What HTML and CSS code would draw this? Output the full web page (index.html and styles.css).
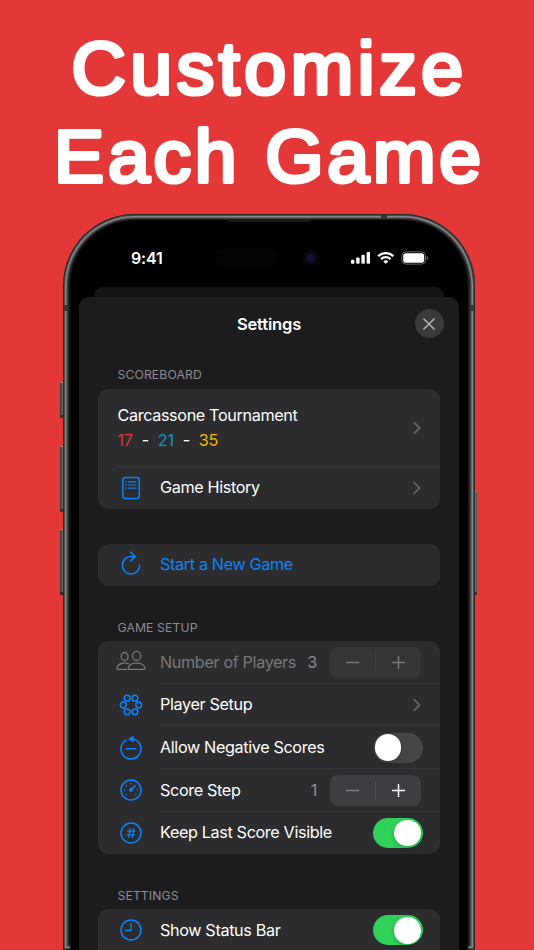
FILE: index.html
```html
<!DOCTYPE html>
<html lang="en">
<head>
    <meta charset="UTF-8">
    <meta name="viewport" content="width=device-width, initial-scale=1.0">
    <title>Customize Each Game</title>
    <link rel="stylesheet" href="styles.css">
</head>
<body>
    <h1 class="headline">
        <svg width="534" height="200" viewBox="0 0 534 200">
            <text x="71.5" y="93.5" textLength="391.5" lengthAdjust="spacing">Customize</text>
            <text x="54" y="182" textLength="427" lengthAdjust="spacing">Each Game</text>
        </svg>
    </h1>

    <div class="phone">
        <span class="side-button action"></span>
        <span class="side-button volume-up"></span>
        <span class="side-button volume-down"></span>
        <span class="side-button power"></span>
        <span class="antenna antenna-top"></span>
        <span class="antenna antenna-left"></span>
        <span class="antenna antenna-right"></span>
        <div class="bezel">
            <span class="speaker"></span>
            <div class="status-bar">
                <span class="time">9:41</span>
                <span class="island"></span>
                <span class="camera"></span>
                <div class="status-icons">
                    <svg width="20" height="14" viewBox="0 0 20 14" fill="#fff">
                        <rect x="0" y="8.8" width="3.4" height="4" rx="1"/>
                        <rect x="5.2" y="6.4" width="3.4" height="6.4" rx="1"/>
                        <rect x="10.4" y="3.7" width="3.4" height="9.1" rx="1"/>
                        <rect x="15.6" y="1" width="3.4" height="11.8" rx="1"/>
                    </svg>
                    <svg width="18" height="14" viewBox="0 0 18 14" fill="none" stroke="#fff" stroke-width="2.2">
                        <path d="M1.2 5.1a11 11 0 0 1 15.2 0"/>
                        <path d="M4 8.1a7 7 0 0 1 9.6 0"/>
                        <path d="M8.8 12.9 6.3 10.3a3.7 3.7 0 0 1 5 0z" fill="#fff" stroke="none"/>
                    </svg>
                    <svg width="28" height="14" viewBox="0 0 28 14">
                        <rect x=".8" y=".9" width="23.8" height="12.2" rx="4" fill="none" stroke="#666" stroke-width="1"/>
                        <rect x="2.2" y="2.3" width="21" height="9.4" rx="2.8" fill="#fff"/>
                        <path d="M25.7 5v4q1.5-.6 1.5-2t-1.5-2z" fill="#666"/>
                    </svg>
                </div>
            </div>

            <div class="back-card"></div>
            <div class="sheet">
                <div class="sheet-header">
                    <h2>Settings</h2>
                    <button class="close">
                        <svg width="12" height="12" viewBox="0 0 12 12" fill="none" stroke="#aeaeb4" stroke-width="1.7" stroke-linecap="round"><path d="M1 1l10 10M11 1 1 11"/></svg>
                    </button>
                </div>

                <h3 class="title-scoreboard">SCOREBOARD</h3>
                <div class="group">
                    <div class="row tournament">
                        <div>
                            <div class="name">Carcassone Tournament</div>
                            <div class="scores"><span class="red">17</span><span>-</span><span class="blue">21</span><span>-</span><span class="yellow">35</span></div>
                        </div>
                        <svg class="chevron" width="8" height="14" viewBox="0 0 8 14"><path d="M1.2 1.7 6.5 7l-5.3 5.3"/></svg>
                    </div>
                    <div class="row full-line">
                        <svg class="icon" viewBox="0 0 30 30">
                            <rect x="6.8" y="4.6" width="16.4" height="20.8" rx="2.4"/>
                            <path d="M12.3 8.9H20M12.3 12H20M12.3 15.1H20" stroke-width="1.2"/>
                            <path d="M9.6 8.9h.4M9.6 12h.4M9.6 15.1h.4" stroke-width="1.4"/>
                        </svg>
                        <span class="label">Game History</span>
                        <svg class="chevron" width="8" height="14" viewBox="0 0 8 14"><path d="M1.2 1.7 6.5 7l-5.3 5.3"/></svg>
                    </div>
                </div>

                <div class="group new-game">
                    <div class="row">
                        <svg class="icon" viewBox="0 0 30 30">
                            <path d="M23.7 15.3A8.7 8.7 0 1 1 15 6.6h4"/>
                            <path d="M14.8 2.3l4.4 4.3-4.4 4.3"/>
                        </svg>
                        <span class="label link">Start a New Game</span>
                    </div>
                </div>

                <h3 class="title-setup">GAME SETUP</h3>
                <div class="group">
                    <div class="row disabled">
                        <svg class="icon" viewBox="0 0 30 30">
                            <ellipse cx="8.6" cy="9.5" rx="3.4" ry="4"/>
                            <ellipse cx="20.6" cy="8.9" rx="4.1" ry="4.6"/>
                            <path d="M10.5 22.4H1.6c-.5 0-.7-.3-.7-.8.2-3 3.2-5.7 7.6-5.7 1.5 0 2.7.3 3.8.8"/>
                            <path d="M13.5 22.4h14.2c1 0 1.4-.5 1.2-1.3-.6-2.8-3.8-5-8.4-5s-7.7 2.2-8.3 5c-.2.8.2 1.3 1.3 1.3z"/>
                        </svg>
                        <span class="label">Number of Players</span>
                        <span class="value">3</span>
                        <div class="stepper"><svg width="91" height="31" viewBox="0 0 91 31"><path d="M16 15.5h13"/><path class="split" d="M45.5 6.5v18"/><path class="plus" d="M62 15.5h13M68.5 9v13"/></svg></div>
                    </div>
                    <div class="row">
                        <svg class="icon" viewBox="0 0 30 30">
                            <circle cx="11.1" cy="8.2" r="2.9"/><circle cx="18.9" cy="8.2" r="2.9"/>
                            <circle cx="7.3" cy="15" r="2.9"/><circle cx="22.7" cy="15" r="2.9"/>
                            <circle cx="11.1" cy="21.8" r="2.9"/><circle cx="18.9" cy="21.8" r="2.9"/>
                        </svg>
                        <span class="label">Player Setup</span>
                        <svg class="chevron" width="8" height="14" viewBox="0 0 8 14"><path d="M1.2 1.7 6.5 7l-5.3 5.3"/></svg>
                    </div>
                    <div class="row">
                        <svg class="icon" viewBox="0 0 30 30">
                            <path d="M10.3 7.1A10 10 0 1 0 20.6 7.7Q18.5 6 15.8 5.8"/>
                            <path d="M10.2 15.8h9.6"/>
                            <path d="M12.8 5.9l4.4-2.7v5.6z" fill="#0a84ff" stroke-width=".7"/>
                        </svg>
                        <span class="label">Allow Negative Scores</span>
                        <span class="toggle"></span>
                    </div>
                    <div class="row">
                        <svg class="icon" viewBox="0 0 30 30">
                            <circle cx="15" cy="15" r="10"/>
                            <path d="M19.3 10.5 15.3 14.4" stroke-width="1.5"/>
                            <path d="M16.2 15.4l-1.4.9-1-1 .8-1.5z" fill="#0a84ff"/>
                            <path d="M8.6 15h.01M10.4 10.8h.01M10.4 19.5h.01M15 8.6h.01M21.4 15h.01M19.6 19.5h.01" stroke-width="1.5"/>
                        </svg>
                        <span class="label">Score Step</span>
                        <span class="value">1</span>
                        <div class="stepper"><svg width="91" height="31" viewBox="0 0 91 31"><path d="M16 15.5h13"/><path class="split" d="M45.5 6.5v18"/><path class="plus" d="M62 15.5h13M68.5 9v13"/></svg></div>
                    </div>
                    <div class="row">
                        <svg class="icon" viewBox="0 0 30 30">
                            <circle cx="15" cy="15" r="10"/>
                            <path d="M14.1 10.7l-1.3 8.8M17.7 10.7l-1.3 8.8M11.6 13.2h7.4M11.1 16.8h7.4" stroke-width="1.3"/>
                        </svg>
                        <span class="label">Keep Last Score Visible</span>
                        <span class="toggle on"></span>
                    </div>
                </div>

                <h3 class="title-settings">SETTINGS</h3>
                <div class="group last">
                    <div class="row">
                        <svg class="icon" viewBox="0 0 30 30">
                            <circle cx="15" cy="15" r="10"/>
                            <path d="M15 8.5v7H9.3" stroke-width="1.3"/>
                        </svg>
                        <span class="label">Show Status Bar</span>
                        <span class="toggle on"></span>
                    </div>
                </div>
            </div>
        </div>
    </div>
</body>
</html>
```
FILE: styles.css
```css
* {
    box-sizing: border-box;
}
body {
    margin: 0;
    height: 950px;
    overflow: hidden;
    background: #e43838;
    color: #fff;
    font-family: Inter, "Liberation Sans", sans-serif;
}
h1, h2, h3 {
    margin: 0;
}
svg {
    display: block;
    flex-shrink: 0;
}
.headline {
    height: 214px;
}
.headline text {
    font: 400 75px "Liberation Sans", Arial, sans-serif;
    fill: #fff;
    stroke: #fff;
    stroke-width: 4.2px;
    stroke-linejoin: round;
}

/* phone body */
.phone {
    position: relative;
    width: 412px;
    height: 736px;
    margin-left: 63px;
    padding: 7px 7px 0;
    border-radius: 72px 72px 0 0;
    background: #252525;
    box-shadow: inset 0 0 0 1px #292929, inset 0 0 0 2px #4b4b4b, inset 0 0 0 3.5px #858585, inset 0 0 0 5px #454545, inset 0 0 0 7px #242424;
}
.bezel {
    margin: 0 1px;
    padding: 0 8px;
    height: 729px;
    overflow: hidden;
    border-radius: 64px 64px 0 0;
    background: #000;
    box-shadow: 0 0 2px 1px #000;
}
.side-button {
    position: absolute;
    left: -3px;
    width: 3px;
    background: linear-gradient(90deg, #363231, #77716d);
    border-top: 1px solid #9a8e88;
    border-bottom: 3px solid #332d2b;
    border-radius: 1px 0 0 1px;
}
.action {
    top: 168px;
    height: 36px;
}
.volume-up {
    top: 232px;
    height: 66px;
}
.volume-down {
    top: 315px;
    height: 66px;
}
.power {
    left: 412px;
    width: 2px;
    top: 277px;
    height: 104px;
    background: linear-gradient(90deg, #555, #858585, #343434);
}
.antenna {
    position: absolute;
    background: #353535;
}
.antenna-top {
    left: 318px;
    top: 1px;
    width: 6px;
    height: 3px;
}
.antenna-left, .antenna-right {
    left: 1px;
    top: 91px;
    width: 4px;
    height: 6px;
}
.antenna-right {
    left: 407px;
}
.speaker {
    position: absolute;
    left: 164px;
    top: 6px;
    width: 84px;
    height: 2px;
    border-radius: 0 0 2px 2px;
    background: #191919;
}

/* status bar */
.status-bar {
    display: flex;
    align-items: center;
    height: 66px;
    padding: 8px 0 0 52px;
}
.time {
    width: 84px;
    flex-shrink: 0;
    font-size: 16px;
    font-weight: 600;
    letter-spacing: -.2px;
}
.island {
    width: 62px;
    height: 21px;
    flex-shrink: 0;
    border-radius: 11px;
    background: #040404;
}
.camera {
    width: 18px;
    height: 18px;
    flex-shrink: 0;
    margin-left: 24.5px;
    border-radius: 50%;
    background: radial-gradient(circle, #10103e 0 2px, #0c0c28 4px, #060509 5.5px, #050405 9px);
}
.status-icons {
    display: flex;
    gap: 6px;
    margin-left: 31px;
}

/* sheet */
.back-card {
    height: 10px;
    margin: 0 15px;
    border-radius: 9px 9px 0 0;
    background: #141414;
}
.sheet {
    height: 653px;
    padding: 0 19px;
    border-radius: 10px 10px 0 0;
    background: #1c1c1e;
}
.sheet-header {
    display: flex;
    align-items: center;
    justify-content: center;
    height: 54px;
}
.sheet-header h2 {
    font-size: 16.5px;
    font-weight: 600;
    letter-spacing: -.15px;
}
.close {
    position: absolute;
    left: 351.5px;
    top: 95px;
    display: flex;
    align-items: center;
    justify-content: center;
    width: 29px;
    height: 29px;
    padding: 0;
    border: 0;
    border-radius: 50%;
    background: #3a3a3d;
}
h3 {
    padding-left: 19.5px;
    color: #8d8d93;
    font-size: 12.2px;
    line-height: 16px;
    font-weight: 400;
    letter-spacing: .12px;
}
.title-scoreboard {
    margin: 16px 0 6px;
}
.title-setup {
    margin: 33.5px 0 5.5px;
}
.title-settings {
    margin: 33.5px 0 5.5px;
}
.group {
    border-radius: 10px;
    background: #2c2c2e;
    overflow: hidden;
}
.new-game {
    margin-top: 34.5px;
}
.last {
    height: 41px;
    border-radius: 10px 10px 0 0;
}
.row {
    position: relative;
    display: flex;
    align-items: center;
    height: 42.6px;
    padding: 0 18px;
}
/* separator starts at the label */
.row + .row::before {
    content: "";
    position: absolute;
    left: 62px;
    right: 0;
    top: -1px;
    height: 1px;
    background: #363638;
}
.row.full-line::before {
    left: 19px;
}
.tournament {
    height: 77.5px;
    justify-content: space-between;
    padding-left: 19.5px;
}
.name, .label, .scores, .value {
    font-size: 16.2px;
    line-height: 25.5px;
    letter-spacing: -.36px;
    white-space: nowrap;
}
.name {
    padding-top: 1px;
}
.scores {
    display: flex;
    gap: 9px;
    letter-spacing: -.3px;
}
.red {
    color: #d93a40;
}
.blue {
    color: #0e93d0;
}
.yellow {
    color: #f5b50a;
}
.icon {
    width: 30px;
    height: 30px;
    fill: none;
    stroke: #0a84ff;
    stroke-width: 1.5;
    stroke-linecap: round;
    stroke-linejoin: round;
}
.label {
    margin-left: 14px;
}
.link {
    color: #0a84ff;
}
.chevron {
    margin-left: auto;
    margin-right: 1px;
    fill: none;
    stroke: #636366;
    stroke-width: 1.8;
    stroke-linecap: round;
    stroke-linejoin: round;
}
.value {
    margin-left: auto;
    margin-right: 13px;
    color: #8c8c91;
}
.stepper {
    margin-right: 1px;
    border-radius: 8px;
    background: #3e3e42;
}
.stepper path {
    fill: none;
    stroke: #818184;
    stroke-width: 1.5;
}
.stepper .split {
    stroke: #505054;
    stroke-width: 1;
}
.stepper .plus {
    stroke: #fff;
}
.disabled .label {
    color: #79797c;
}
.disabled .icon {
    stroke: #79797c;
    stroke-width: 1.3;
}
.disabled .stepper {
    background: #353537;
}
.disabled .stepper path {
    stroke: #78787b;
}
.disabled .stepper .split {
    stroke: #3f3f42;
}
.toggle {
    width: 49.5px;
    height: 30px;
    margin-left: auto;
    margin-right: -.5px;
    padding: 1.7px;
    border-radius: 15px;
    background: #464649;
}
.toggle::before {
    content: "";
    display: block;
    width: 26.6px;
    height: 26.6px;
    border-radius: 50%;
    background: #fff;
    box-shadow: 0 2px 5px rgba(0, 0, 0, .2);
}
.toggle.on {
    background: #30d158;
}
.toggle.on::before {
    margin-left: auto;
}
```
